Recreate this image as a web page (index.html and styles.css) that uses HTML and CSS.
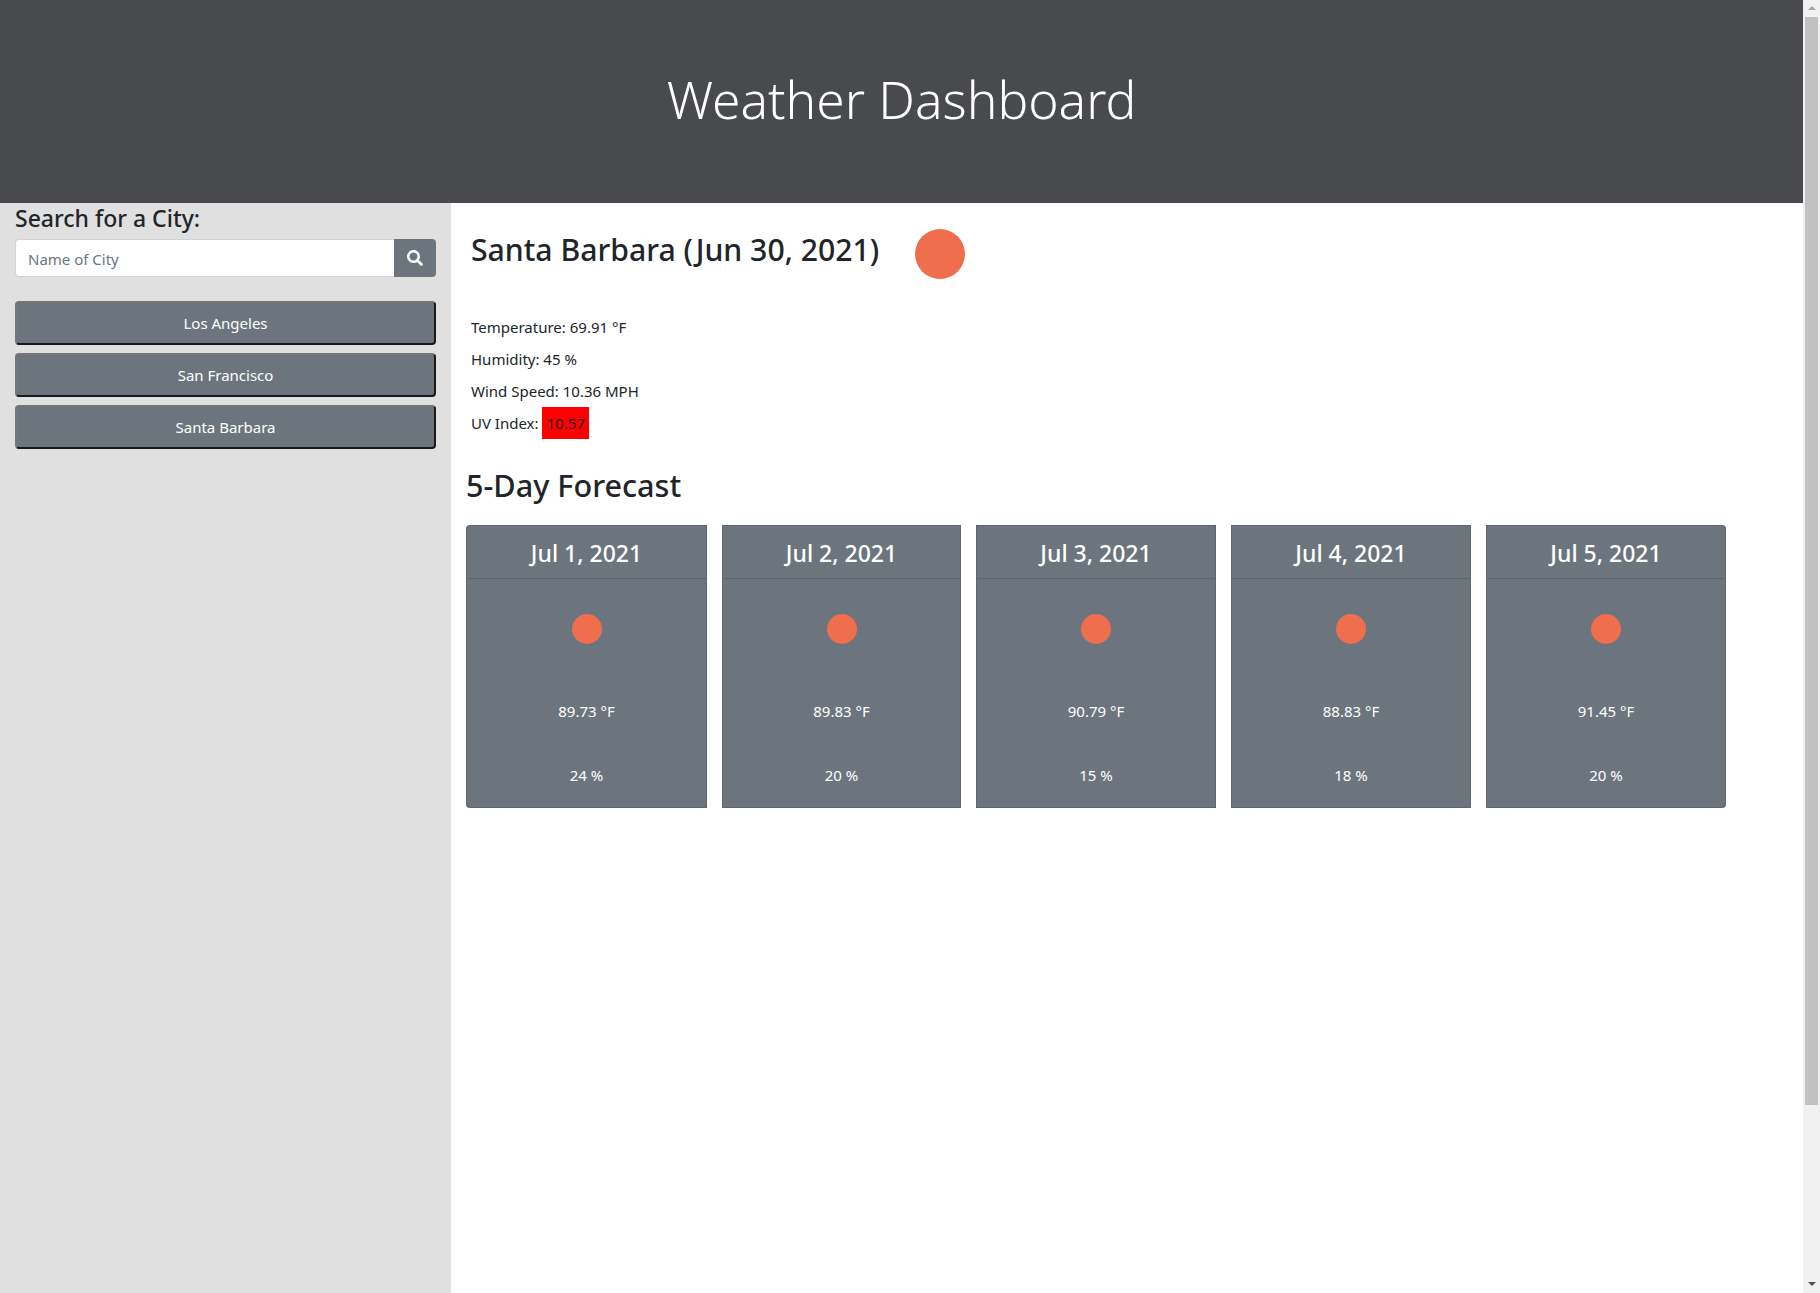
FILE: index.html
```html
<!doctype html>
<html lang="en">
<head>
  <meta charset="UTF-8">
  <title>Weather Dashboard</title>
  <link rel="stylesheet" href="styles.css">
</head>
<body>
  <div class="page">
    <header class="jumbo">
      <h1>Weather Dashboard</h1>
    </header>
    <div class="content">
      <aside class="side">
        <h4>Search for a City:</h4>
        <form class="search">
          <input type="text" placeholder="Name of City">
          <button type="button" class="search-btn" aria-label="Search">
            <svg width="16" height="16" viewBox="0 0 512 512"><path fill="#fff" d="M505 442.7L405.3 343c-4.5-4.5-10.6-7-17-7H372c27.6-35.3 44-79.7 44-128C416 93.1 322.9 0 208 0S0 93.1 0 208s93.1 208 208 208c48.3 0 92.7-16.4 128-44v16.3c0 6.4 2.5 12.5 7 17l99.7 99.7c9.4 9.4 24.6 9.4 33.9 0l28.3-28.3c9.4-9.4 9.4-24.6.1-34zM208 336c-70.7 0-128-57.2-128-128 0-70.7 57.2-128 128-128 70.7 0 128 57.2 128 128 0 70.7-57.2 128-128 128z"/></svg>
          </button>
        </form>
        <ul class="history">
          <li><button type="button">Los Angeles</button></li>
          <li><button type="button">San Francisco</button></li>
          <li><button type="button">Santa Barbara</button></li>
        </ul>
      </aside>
      <main class="main">
        <section class="today">
          <div class="today-head">
            <h2>Santa Barbara (Jun 30, 2021)</h2>
            <span class="sun sun-big"></span>
          </div>
          <p>Temperature: 69.91 °F</p>
          <p>Humidity: 45 %</p>
          <p>Wind Speed: 10.36 MPH</p>
          <p>UV Index: <span class="uv">10.57</span></p>
        </section>
        <section class="forecast">
          <h2>5-Day Forecast</h2>
          <div class="cards">
            <div class="card"><div class="card-head">Jul 1, 2021</div><div class="card-body"><span class="sun"></span><p class="temp">89.73 °F</p><p class="hum">24 %</p></div></div>
            <div class="card"><div class="card-head">Jul 2, 2021</div><div class="card-body"><span class="sun"></span><p class="temp">89.83 °F</p><p class="hum">20 %</p></div></div>
            <div class="card"><div class="card-head">Jul 3, 2021</div><div class="card-body"><span class="sun"></span><p class="temp">90.79 °F</p><p class="hum">15 %</p></div></div>
            <div class="card"><div class="card-head">Jul 4, 2021</div><div class="card-body"><span class="sun"></span><p class="temp">88.83 °F</p><p class="hum">18 %</p></div></div>
            <div class="card"><div class="card-head">Jul 5, 2021</div><div class="card-body"><span class="sun"></span><p class="temp">91.45 °F</p><p class="hum">20 %</p></div></div>
          </div>
        </section>
      </main>
    </div>
  </div>
  <div class="scrollbar">
    <span class="arrow arrow-up"></span>
    <span class="thumb"></span>
    <span class="arrow arrow-down"></span>
  </div>
</body>
</html>
```

FILE: styles.css
```css
html,body{margin:0;padding:0;height:1293px;overflow:hidden;}
body{display:flex;font-family:"Noto Sans","Liberation Sans",sans-serif;font-size:15px;line-height:24px;color:#212529;background:#fff;}
h1,h2,h4,p,ul,li{margin:0;padding:0;list-style:none;}
button{font-family:inherit;cursor:pointer;}

.page{width:1803px;display:flex;flex-direction:column;}
.jumbo{height:203px;box-sizing:border-box;padding-bottom:5px;background:#484a4e;display:flex;align-items:center;justify-content:center;}
.jumbo h1{font-size:51.5px;font-weight:300;line-height:62px;color:#fff;}
.content{flex:1;display:flex;}

.side{width:421px;padding:0 15px;background:#e0e0e0;}
.side h4{font-size:23px;font-weight:500;line-height:31px;margin-bottom:5px;}
.search{display:flex;height:38px;margin-bottom:24px;}
.search input{flex:1;min-width:0;box-sizing:border-box;height:38px;padding:2px 12px 0;border:1px solid #ced4da;border-right:0;border-radius:4px 0 0 4px;font-family:inherit;font-size:15px;color:#495057;background:#fff;outline:0;}
.search input::placeholder{color:#6c757d;opacity:1;}
.search-btn{width:42px;height:38px;padding:0;border:0;border-radius:0 4px 4px 0;background:#6c757d;display:flex;align-items:center;justify-content:center;}

.history li{margin-bottom:8px;}
.history button{display:block;width:100%;height:44px;border:2px solid;border-color:#767676 #1a1a1a #1a1a1a #767676;border-radius:4px;background:#6c757d;color:#fff;font-size:15px;}

.main{flex:1;}
.today{padding:26px 0 0 20px;}
.today-head{display:flex;align-items:flex-start;height:50px;margin-bottom:36px;}
.today-head h2{font-size:30.2px;font-weight:500;line-height:42px;margin-right:36px;}
.today p{margin-bottom:8px;}
.uv{display:inline-block;padding:4px;margin:-4px 0;background:#f00;}

.sun{display:block;width:30px;height:30px;border-radius:50%;background:#ee6e4d;}
.sun-big{width:50px;height:50px;}

.forecast{padding:23px 0 0 15px;}
.forecast h2{font-size:30.6px;font-weight:500;line-height:38px;margin-bottom:21px;}
.cards{display:flex;gap:15px;width:1260px;}
.card{flex:1;height:283px;box-sizing:border-box;border:1px solid rgba(0,0,0,.125);background:#6c757d;color:#fff;text-align:center;}
.card:first-child{flex:0 0 241px;border-radius:4px 0 0 4px;}
.card:nth-child(2){flex:0 0 239px;}
.card:last-child{border-radius:0 4px 4px 0;}
.card-head{height:53px;box-sizing:border-box;line-height:54px;font-size:23px;font-weight:500;border-bottom:1px solid rgba(0,0,0,.125);}
.card-body{padding-top:35px;}
.card-body .sun{margin:0 auto;}
.temp{margin-top:55px;}
.hum{margin-top:40px;}

.scrollbar{width:17px;height:1293px;background:#f1f1f1;display:flex;flex-direction:column;align-items:center;}
.thumb{width:13px;height:1088px;background:#c1c1c1;}
.arrow{width:0;height:0;border-left:4px solid transparent;border-right:4px solid transparent;}
.arrow-up{margin:6px 0 7px;border-bottom:4px solid #a3a3a3;}
.arrow-down{margin-top:177px;border-top:4px solid #505050;}
```
